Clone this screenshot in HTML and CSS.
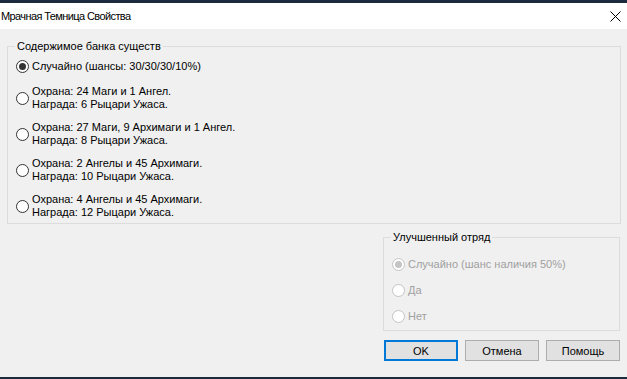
FILE: index.html
```html
<!DOCTYPE html>
<html lang="ru">
<head>
<meta charset="utf-8">
<title>Мрачная Темница Свойства</title>
<link rel="stylesheet" href="styles.css">
</head>
<body>
<div class="window">
  <div class="strip strip-top"></div>
  <div class="titlebar">
    <span class="title">Мрачная Темница Свойства</span>
    <svg class="close" width="11" height="11" viewBox="0 0 11 11"><path d="M0.5 0.5 L10.5 10.5 M10.5 0.5 L0.5 10.5" stroke="#000" stroke-width="1" fill="none"/></svg>
  </div>
  <div class="client">
    <fieldset class="group group-main">
      <legend class="legend">Содержимое банка существ</legend>
      <div class="options options-main">
        <div class="opt opt-first"><span class="radio checked"></span><span class="opt-text">Случайно (шансы: 30/30/30/10%)</span></div>
        <div class="opt"><span class="radio"></span><span class="opt-text">Охрана: 24 Маги и 1 Ангел.<br>Награда: 6 Рыцари Ужаса.</span></div>
        <div class="opt"><span class="radio"></span><span class="opt-text">Охрана: 27 Маги, 9 Архимаги и 1 Ангел.<br>Награда: 8 Рыцари Ужаса.</span></div>
        <div class="opt"><span class="radio"></span><span class="opt-text">Охрана: 2 Ангелы и 45 Архимаги.<br>Награда: 10 Рыцари Ужаса.</span></div>
        <div class="opt"><span class="radio"></span><span class="opt-text">Охрана: 4 Ангелы и 45 Архимаги.<br>Награда: 12 Рыцари Ужаса.</span></div>
      </div>
    </fieldset>
    <div class="lower">
      <fieldset class="group group-upg">
        <legend class="legend">Улучшенный отряд</legend>
        <div class="options options-upg">
          <div class="opt disabled"><span class="radio checked"></span><span class="opt-text">Случайно (шанс наличия 50%)</span></div>
          <div class="opt disabled"><span class="radio"></span><span class="opt-text">Да</span></div>
          <div class="opt disabled"><span class="radio"></span><span class="opt-text">Нет</span></div>
        </div>
      </fieldset>
      <div class="buttons">
        <div class="btn btn-default">OK</div>
        <div class="btn">Отмена</div>
        <div class="btn">Помощь</div>
      </div>
    </div>
  </div>
  <div class="strip strip-bottom"></div>
</div>
</body>
</html>
```

FILE: styles.css
```css
* { box-sizing: border-box; }
html, body { margin: 0; padding: 0; }
body {
  width: 627px;
  height: 379px;
  overflow: hidden;
  font-family: "Liberation Sans", Arial, sans-serif;
  font-size: 11px;
  color: #000;
  background: #f0f0f0;
}
.window {
  display: flex;
  flex-direction: column;
  width: 627px;
  height: 379px;
}
.strip { background: #1b2a3e; flex: none; }
.strip-top { height: 3px; }
.strip-bottom { height: 2px; }
.titlebar {
  flex: none;
  height: 26px;
  background: #fff;
  display: flex;
  align-items: center;
  justify-content: space-between;
  padding: 0 6px 0 1px;
}
.title {
  font-family: "Liberation Sans", Arial, sans-serif;
  font-size: 11px;
  letter-spacing: -0.6px;
  line-height: 14px;
}
.close { display: block; margin-top: 1px; }
.client {
  flex: 1;
  background: #f0f0f0;
  padding: 11px 6px 0 7px;
  display: flex;
  flex-direction: column;
}
.group {
  margin: 0;
  padding: 0;
  min-width: 0;
  border: 1px solid #dcdcdc;
}
.legend {
  margin-left: 7px;
  padding: 0 2px;
  line-height: 13px;
  font-size: 11px;
}
.options { display: flex; flex-direction: column; }
.options-main { padding: 7px 8px 4px 8px; gap: 10px; }
.opt-first { margin-bottom: 2px; }
.options-upg { padding: 14px 8px 7px 8px; gap: 13px; }
.opt {
  display: flex;
  align-items: center;
  gap: 3px;
  line-height: 13px;
}
.radio {
  flex: none;
  width: 13px;
  height: 13px;
  border-radius: 50%;
  border: 1px solid #333;
  background: #fff;
  display: flex;
  align-items: center;
  justify-content: center;
}
.radio.checked::after {
  content: "";
  width: 7px;
  height: 7px;
  border-radius: 50%;
  background: #333;
}
.disabled { color: #a0a0a0; }
.disabled .radio { border-color: #c4c4c4; background: #fff; }
.disabled .radio.checked::after { background: #c4c4c4; }
.lower {
  align-self: flex-end;
  width: 237px;
  margin-right: 1px;
  margin-top: 7px;
  display: flex;
  flex-direction: column;
}
.group-upg { width: 237px; }
.buttons {
  display: flex;
  gap: 7px;
  margin-top: 9px;
  padding-left: 1px;
}
.btn {
  width: 74px;
  height: 21px;
  border: 1px solid #adadad;
  background: #e1e1e1;
  display: flex;
  align-items: center;
  justify-content: center;
  font-size: 11px;
}
.btn-default { border: 2px solid #0078d7; }
```
